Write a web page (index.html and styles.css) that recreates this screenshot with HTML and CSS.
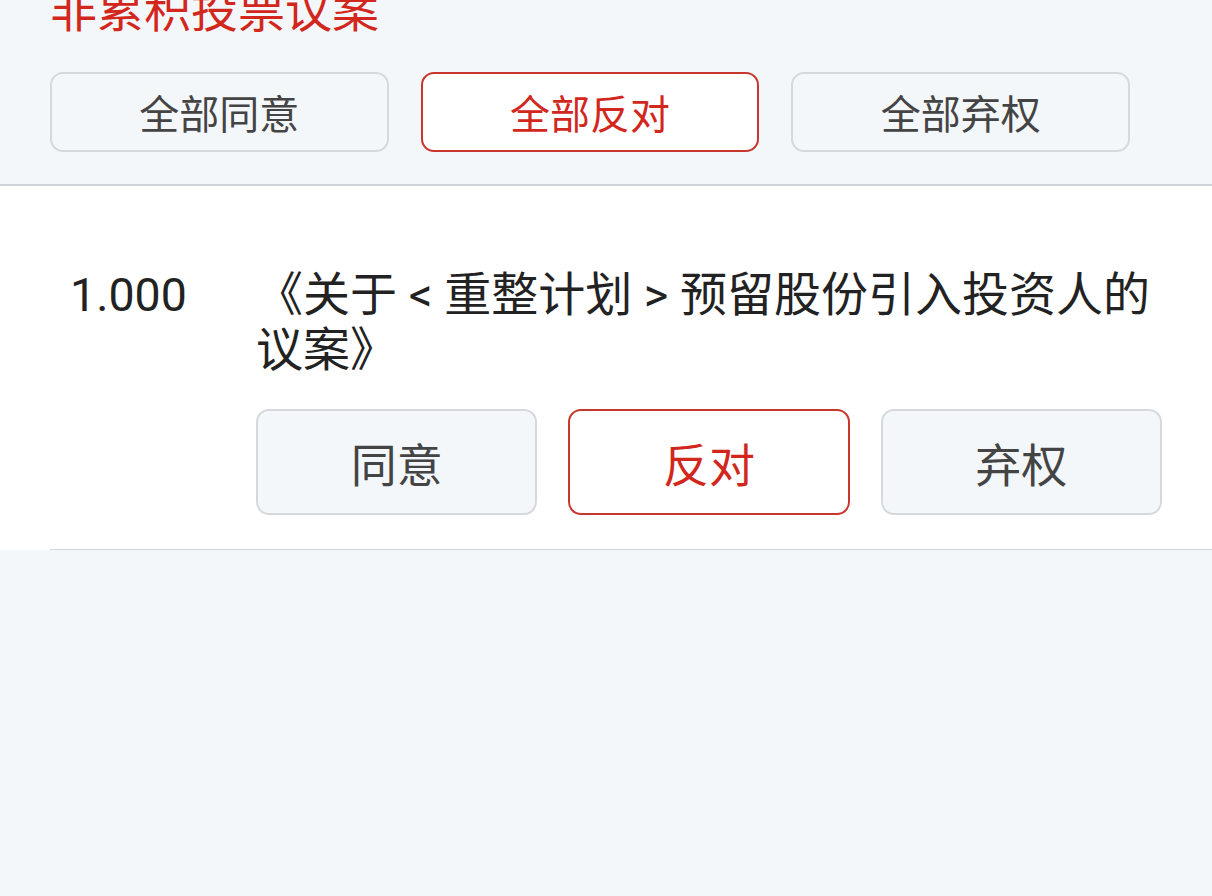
FILE: index.html
```html
<!DOCTYPE html>
<html lang="zh-CN">
<head>
<meta charset="utf-8">
<title>非累积投票议案</title>
<link rel="stylesheet" href="styles.css">
</head>
<body>
<div class="page">
  <section class="batch">
    <h2 class="batch-title">非累积投票议案</h2>
    <div class="batch-actions">
      <button class="opt">全部同意</button>
      <button class="opt active">全部反对</button>
      <button class="opt">全部弃权</button>
    </div>
  </section>
  <section class="list">
    <div class="item">
      <div class="item-no">1.000</div>
      <div class="item-body">
        <div class="item-title">《关于 &lt; 重整计划 &gt; 预留股份引入投资人的议案》</div>
        <div class="item-actions">
          <button class="opt big">同意</button>
          <button class="opt big active">反对</button>
          <button class="opt big">弃权</button>
        </div>
      </div>
    </div>
  </section>
</div>
</body>
</html>
```

FILE: styles.css
```css
html, body {
  margin: 0;
  padding: 0;
  background: #f4f7fa;
}
body {
  font-family: Roboto, "Noto Sans CJK SC", sans-serif;
  color: #222;
  height: 896px;
  overflow: hidden;
}
.page {
  margin-top: -22px;
}
.batch {
  padding: 0 82px 32px 50px;
  border-bottom: 2px solid #cfd3d7;
}
.batch-title {
  margin: 0;
  font-family: "Noto Sans CJK SC", sans-serif;
  font-size: 47px;
  line-height: 58px;
  font-weight: 400;
  color: #d2271d;
}
.batch-actions {
  margin-top: 36px;
  display: grid;
  grid-template-columns: repeat(3, 1fr);
  gap: 32px;
}
.opt {
  height: 80px;
  border: 2px solid #d5d9de;
  border-radius: 13px;
  background: #f4f7fa;
  color: #444;
  font-family: "Noto Sans CJK SC", sans-serif;
  font-size: 40px;
  padding: 0;
  margin: 0;
}
.opt.active {
  background: #fff;
  border-color: #c9362d;
  color: #d2271d;
}
.list {
  background: #fff;
}
.item {
  margin-left: 50px;
  padding: 81px 50px 34px 20px;
  border-bottom: 1px solid #d3d6da;
  display: flex;
}
.item-no {
  width: 186px;
  flex: none;
  font-size: 46.5px;
  line-height: 56px;
  color: #222;
}
.item-body {
  flex: 1;
}
.item-title {
  font-size: 47px;
  line-height: 55px;
  color: #222;
}
.item-actions {
  margin-top: 32px;
  display: grid;
  grid-template-columns: repeat(3, 1fr);
  gap: 31px;
}
.opt.big {
  height: 106px;
  font-size: 46px;
}
```
